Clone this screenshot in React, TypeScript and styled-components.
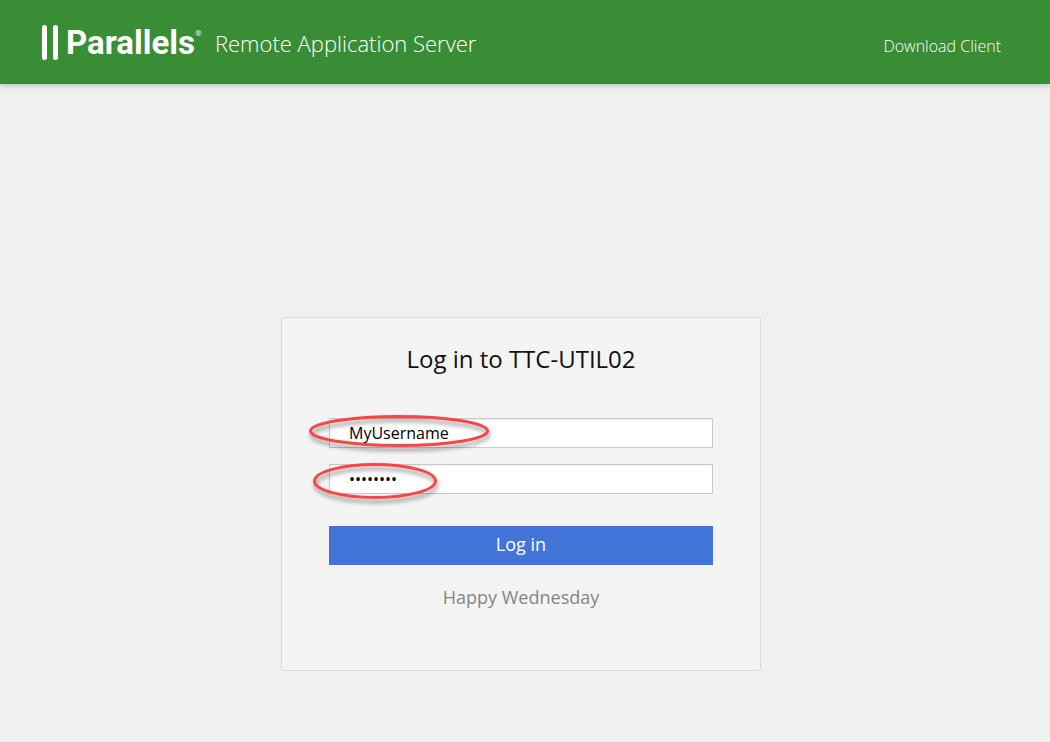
import React from "react";
import styled, { createGlobalStyle } from "styled-components";

const GlobalStyle = createGlobalStyle`
  *, *::before, *::after { box-sizing: border-box; }
  body {
    margin: 0;
    background: #f0f0f0;
    font-family: "Open Sans", "Noto Sans", sans-serif;
    color: #111;
  }
`;

const Page = styled.div`
  min-height: 100vh;
  display: flex;
  flex-direction: column;
`;

const Header = styled.header`
  display: flex;
  align-items: center;
  justify-content: space-between;
  height: 84px;
  padding: 2px 49px 0 41px;
  background: #398d34;
  box-shadow: 0 1px 6px rgba(0, 0, 0, 0.25);
  color: #fff;
`;

const Brand = styled.div`
  display: flex;
  align-items: center;
`;

const Bars = styled.svg`
  display: block;
  margin-right: 7px;
`;

const Wordmark = styled.span`
  font: 700 33px/36px Roboto, sans-serif;
`;

const Registered = styled.sup`
  align-self: flex-start;
  width: 20px;
  font-size: 8px;
  line-height: 16px;
`;

const Product = styled.span`
  font-size: 22px;
  font-weight: 300;
  line-height: 32px;
`;

const HeaderLink = styled.a`
  padding-top: 6px;
  color: #fff;
  font-size: 16px;
  font-weight: 300;
  line-height: 24px;
  text-decoration: none;
`;

const Main = styled.main`
  display: flex;
  justify-content: center;
  padding: 233px 8px 48px 0;
`;

const Card = styled.form`
  width: 100%;
  max-width: 480px;
  min-height: 354px;
  padding: 23px 47px;
  border: 1px solid #dadada;
  border-radius: 2px;
  background: #f4f4f4;
`;

const Title = styled.h1`
  margin: 0 0 41px;
  font-size: 24px;
  font-weight: 400;
  line-height: 36px;
  text-align: center;
`;

const Field = styled.div`
  position: relative;
  margin-bottom: 16px;
`;

const TextInput = styled.input`
  display: block;
  width: 100%;
  height: 30px;
  padding: 0 19px;
  border: 1px solid #c8c8c8;
  border-radius: 0;
  outline: none;
  background: #fff;
  box-shadow: inset 0 1px 1px rgba(0, 0, 0, 0.08);
  color: #000;
  font-family: inherit;
  font-size: 16px;
  font-weight: 400;
`;

const Highlight = styled.svg<{ $left: number; $top: number }>`
  position: absolute;
  top: ${({ $top }) => $top}px;
  left: ${({ $left }) => $left}px;
  overflow: visible;
  pointer-events: none;
  filter: drop-shadow(1px 4px 2px rgba(0, 0, 0, 0.4));
`;

const Submit = styled.button`
  display: block;
  width: 100%;
  height: 39px;
  margin-top: 32px;
  padding: 0 0 4px;
  border: 0;
  background: #4275d7;
  color: #fff;
  font-family: inherit;
  font-size: 18px;
  font-weight: 400;
`;

const Greeting = styled.p`
  margin: 20px 0 0;
  color: #858585;
  font-size: 18px;
  line-height: 24px;
  text-align: center;
`;

type EllipseProps = { left: number; top: number; width: number; height: number };

function Ellipse({ left, top, width, height }: EllipseProps) {
  return (
    <Highlight $left={left} $top={top} width={width} height={height} aria-hidden="true">
      <ellipse
        cx={width / 2}
        cy={height / 2}
        rx={width / 2 - 1.5}
        ry={height / 2 - 1.5}
        fill="none"
        stroke="#fa4545"
        strokeWidth="3"
      />
    </Highlight>
  );
}

export default function App() {
  return (
    <Page>
      <GlobalStyle />
      <Header>
        <Brand>
          <Bars width="18" height="36" viewBox="0 0 18 36" fill="#fff" aria-hidden="true">
            <rect x="1" y="0" width="5" height="35" rx="2.5" />
            <rect x="12" y="0" width="5" height="35" rx="2.5" />
          </Bars>
          <Wordmark>Parallels</Wordmark>
          <Registered>®</Registered>
          <Product>Remote Application Server</Product>
        </Brand>
        <HeaderLink href="#download">Download Client</HeaderLink>
      </Header>
      <Main>
        <Card onSubmit={(event) => event.preventDefault()}>
          <Title>Log in to TTC-UTIL02</Title>
          <Field>
            <TextInput type="text" aria-label="Username" defaultValue="MyUsername" />
            <Ellipse left={-20} top={-3} width={180} height={32} />
          </Field>
          <Field>
            <TextInput type="password" aria-label="Password" defaultValue="password" />
            <Ellipse left={-16} top={-1} width={124} height={36} />
          </Field>
          <Submit type="submit">Log in</Submit>
          <Greeting>Happy Wednesday</Greeting>
        </Card>
      </Main>
    </Page>
  );
}
